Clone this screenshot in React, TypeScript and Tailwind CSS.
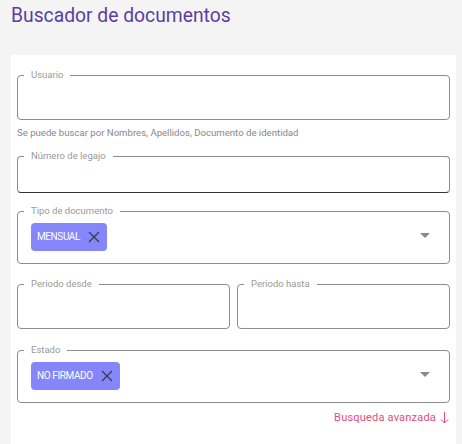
import React from "react";

function XIcon() {
  return (
    <svg width="12" height="12" viewBox="0 0 12 12" className="shrink-0">
      <path d="M1 1 L11 11 M11 1 L1 11" stroke="#3a3a4a" strokeWidth="1.3" fill="none" />
    </svg>
  );
}

function Arrow() {
  return (
    <svg width="10" height="5" viewBox="0 0 10 5" className="shrink-0">
      <path d="M0 0 L10 0 L5 5 Z" fill="#8a8a8a" />
    </svg>
  );
}

function Chip({ text }: { text: string }) {
  return (
    <div className="flex h-[28px] items-center gap-[8px] rounded-[4px] bg-[#8686fb] pl-[6px] pr-[7px]">
      <span className="text-[10px] leading-none tracking-[-0.4px] text-white">{text}</span>
      <XIcon />
    </div>
  );
}

function Field({
  label,
  className,
  children,
}: {
  label: string;
  className: string;
  children?: React.ReactNode;
}) {
  return (
    <fieldset className={"min-w-0 rounded-[4px] border border-[#8c8c8c] px-[6px] " + className}>
      <legend className="px-[7px] text-[9.5px] leading-[12px] text-[#999]">{label}</legend>
      {children}
    </fieldset>
  );
}

export default function App() {
  return (
    <div className="min-h-[444px] w-[462px] bg-[#f4f4f4]" style={{ fontFamily: "Roboto, 'Liberation Sans', sans-serif" }}>
      <div className="h-[55px] pl-[11px] pt-[2px]">
        <h1 className="text-[19.3px] leading-[28px] text-[#5a3fa3]">Buscador de documentos</h1>
      </div>
      <div className="ml-[11px] mr-[6px] h-[389px] bg-white px-[6px] pt-[14px]">
        <Field label="Usuario" className="h-[51px]" />
        <p className="mt-[7px] text-[9.6px] leading-[12px] text-[#888]">
          Se puede buscar por Nombres, Apellidos, Documento de identidad
        </p>
        <Field label="Número de legajo" className="mt-[11px] h-[43px] border-b-[#333]" />
        <Field label="Tipo de documento" className="mt-[12px] h-[59px]">
          <div className="flex items-center pl-[7px] pr-[13px] pt-[6px]">
            <Chip text="MENSUAL" />
            <div className="flex-1" />
            <div className="mb-[3px]">
              <Arrow />
            </div>
          </div>
        </Field>
        <div className="mt-[14px] flex gap-[7px]">
          <Field label="Periodo desde" className="h-[51px] flex-1" />
          <Field label="Periodo hasta" className="h-[51px] flex-1" />
        </div>
        <Field label="Estado" className="mt-[15px] h-[59px]">
          <div className="flex items-center pl-[7px] pr-[13px] pt-[6px]">
            <Chip text="NO FIRMADO" />
            <div className="flex-1" />
            <div className="mb-[3px]">
              <Arrow />
            </div>
          </div>
        </Field>
        <div className="mt-[8px] flex items-center justify-end gap-[4px] pr-[1px]">
          <span className="text-[11px] leading-[14px] tracking-[0.2px] text-[#e54b7c]">Busqueda avanzada</span>
          <svg width="9" height="12" viewBox="0 0 9 12">
            <path d="M4.5 0 V11 M0.8 7.3 L4.5 11 L8.2 7.3" stroke="#e54b7c" strokeWidth="1" fill="none" />
          </svg>
        </div>
      </div>
    </div>
  );
}
